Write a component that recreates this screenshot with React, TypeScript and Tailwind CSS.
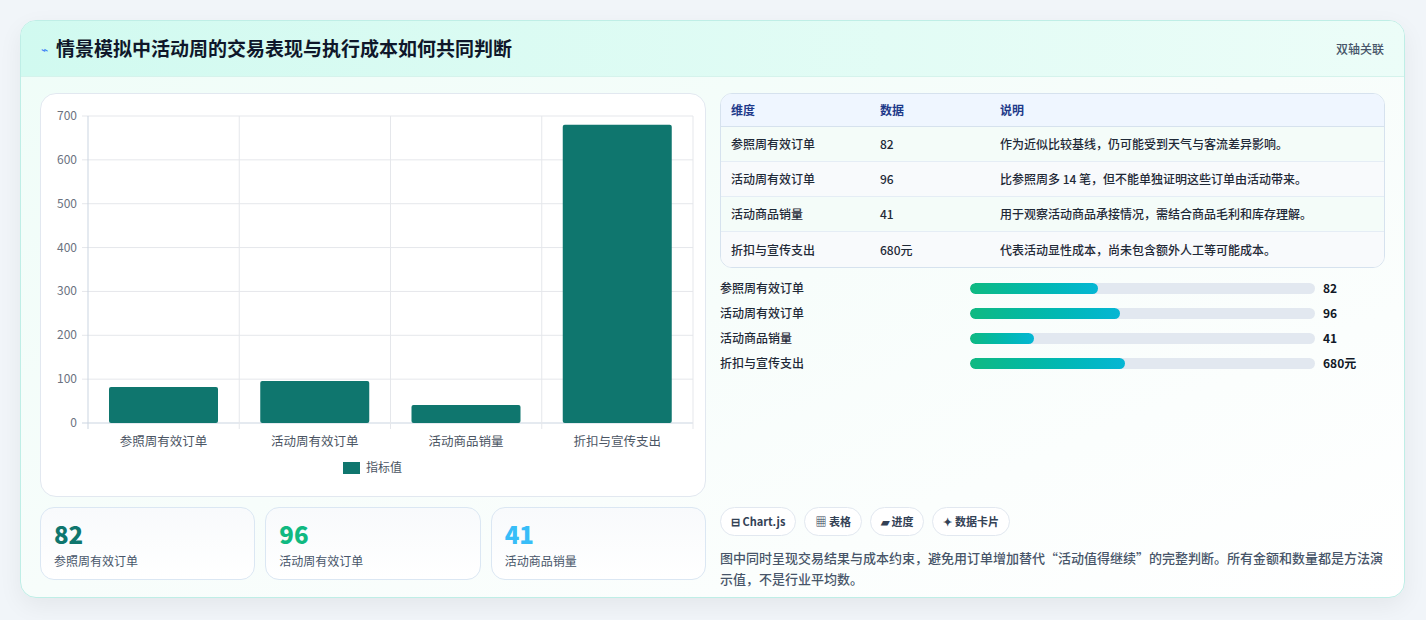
import React from "react";

const F = '"Noto Sans CJK SC","Noto Sans",sans-serif';

const bars = [
  { l: "参照周有效订单", v: 82 },
  { l: "活动周有效订单", v: 96 },
  { l: "活动商品销量", v: 41 },
  { l: "折扣与宣传支出", v: 680 },
];

function Chart() {
  const x0 = 47, x1 = 652, y0 = 22, y1 = 329;
  const cw = (x1 - x0) / 4;
  const sy = (v: number) => y1 - (v / 700) * (y1 - y0);
  return (
    <svg width="665" height="402" style={{ fontFamily: F }}>
      {[0, 100, 200, 300, 400, 500, 600, 700].map((t) => (
        <g key={t}>
          <line x1={x0 - 6} x2={x1} y1={sy(t)} y2={sy(t)} stroke={t === 0 ? "#cbd5e1" : "#e5e7eb"} />
          <text x={36} y={sy(t) + 4} textAnchor="end" fontSize="12" fill="#6b7280">{t}</text>
        </g>
      ))}
      {[0, 1, 2, 3, 4].map((i) => (
        <line key={i} x1={x0 + i * cw} x2={x0 + i * cw} y1={y0} y2={y1 + 6} stroke={i === 0 ? "#cbd5e1" : "#e5e7eb"} />
      ))}
      {bars.map((b, i) => (
        <g key={b.l}>
          <rect x={x0 + i * cw + 21} y={sy(b.v)} width={109} height={y1 - sy(b.v)} rx="2" fill="#0f766e" />
          <text x={x0 + i * cw + cw / 2} y={352} textAnchor="middle" fontSize="12.5" fill="#4b5563">{b.l}</text>
        </g>
      ))}
      <rect x={302} y={368} width={17} height={12} fill="#0f766e" />
      <text x={325} y={378} fontSize="12" fill="#4b5563">指标值</text>
    </svg>
  );
}

const rows = [
  ["参照周有效订单", "82", "作为近似比较基线，仍可能受到天气与客流差异影响。"],
  ["活动周有效订单", "96", "比参照周多 14 笔，但不能单独证明这些订单由活动带来。"],
  ["活动商品销量", "41", "用于观察活动商品承接情况，需结合商品毛利和库存理解。"],
  ["折扣与宣传支出", "680元", "代表活动显性成本，尚未包含额外人工等可能成本。"],
];
const prog = [
  ["参照周有效订单", 37, "82"],
  ["活动周有效订单", 43.5, "96"],
  ["活动商品销量", 18.5, "41"],
  ["折扣与宣传支出", 45, "680元"],
] as const;

export default function App() {
  return (
    <div className="w-[1426px] h-[620px] bg-[#f1f5f9] pt-[20px] pl-[20px]" style={{ fontFamily: F }}>
      <div className="w-[1385px] h-[578px] rounded-[16px] border border-[#bfeee6] overflow-hidden bg-gradient-to-br from-[#effdf8] via-[#f7fdfb] to-[#ffffff] shadow-[0_8px_24px_rgba(0,0,0,0.06)]">
        <div className="h-[56px] flex items-center justify-between px-[20px] bg-gradient-to-r from-[#d1faf0] to-[#ecfdf8] border-b border-[#d5f3ec]">
          <div className="flex items-center gap-[8px]">
            <span className="text-[#3b82f6] text-[12px]">⌁</span>
            <span className="text-[19px] font-bold text-[#0f172a]">情景模拟中活动周的交易表现与执行成本如何共同判断</span>
          </div>
          <span className="text-[12px] text-[#475569] font-medium">双轴关联</span>
        </div>
        <div className="flex gap-[14px] px-[19px] pt-[16px]">
          <div className="w-[666px] flex flex-col gap-[10px]">
            <div className="h-[404px] rounded-[16px] border border-[#e2e8f0] bg-white">
              <Chart />
            </div>
            <div className="grid grid-cols-3 gap-[10px]">
              {[["82", "#0f766e", "参照周有效订单"], ["96", "#10b981", "活动周有效订单"], ["41", "#38bdf8", "活动商品销量"]].map(([n, c, l]) => (
                <div key={l} className="h-[73px] rounded-[14px] border border-[#dbe7f3] bg-gradient-to-b from-[#f8fafc] to-white px-[13px] pt-[10px]">
                  <div className="text-[24px] font-extrabold leading-[32px]" style={{ color: c }}>{n}</div>
                  <div className="text-[12px] text-[#475569] mt-[2px]">{l}</div>
                </div>
              ))}
            </div>
          </div>
          <div className="w-[667px] flex flex-col">
            <div className="rounded-[12px] border border-[#d6e2ee] overflow-hidden bg-white">
              <div className="flex h-[33px] items-center bg-[#eff6ff] border-b border-[#d6e2ee] text-[12px] font-semibold text-[#1e3a8a]">
                <div className="w-[159px] pl-[10px]">维度</div>
                <div className="w-[120px]">数据</div>
                <div>说明</div>
              </div>
              {rows.map((r, i) => (
                <div key={i} className={`flex h-[35px] items-center text-[12px] text-[#1f2937] font-medium ${i < 3 ? "border-b border-[#e5edf5]" : ""} ${i % 2 === 0 ? "bg-[#f4fcf9]" : "bg-[#f8fafc]"}`}>
                  <div className="w-[159px] pl-[10px]">{r[0]}</div>
                  <div className="w-[120px]">{r[1]}</div>
                  <div>{r[2]}</div>
                </div>
              ))}
            </div>
            <div className="flex flex-col gap-[7px] mt-[11px]">
              {prog.map(([l, p, v]) => (
                <div key={l} className="flex items-center h-[18px] text-[12px] font-medium text-[#1f2937]">
                  <div className="w-[250px]">{l}</div>
                  <div className="w-[345px] h-[11px] rounded-full bg-[#e2e8f0] overflow-hidden">
                    <div className="h-full rounded-full bg-gradient-to-r from-[#10b981] to-[#06b6d4]" style={{ width: `${p}%` }} />
                  </div>
                  <div className="ml-[8px] font-bold text-[#111827]">{v}</div>
                </div>
              ))}
            </div>
            <div className="flex gap-[8px] mt-[135px]">
              {["⊟ Chart.js", "▦ 表格", "▰ 进度", "✦ 数据卡片"].map((c) => (
                <span key={c} className="h-[29px] px-[10px] flex items-center rounded-full border border-[#e2e8f0] bg-white text-[11px] font-semibold text-[#334155]">{c}</span>
              ))}
            </div>
            <p className="mt-[11px] text-[13px] leading-[21px] text-[#475569] font-medium">
              图中同时呈现交易结果与成本约束，避免用订单增加替代“活动值得继续”的完整判断。所有金额和数量都是方法演示值，不是行业平均数。
            </p>
          </div>
        </div>
      </div>
    </div>
  );
}
